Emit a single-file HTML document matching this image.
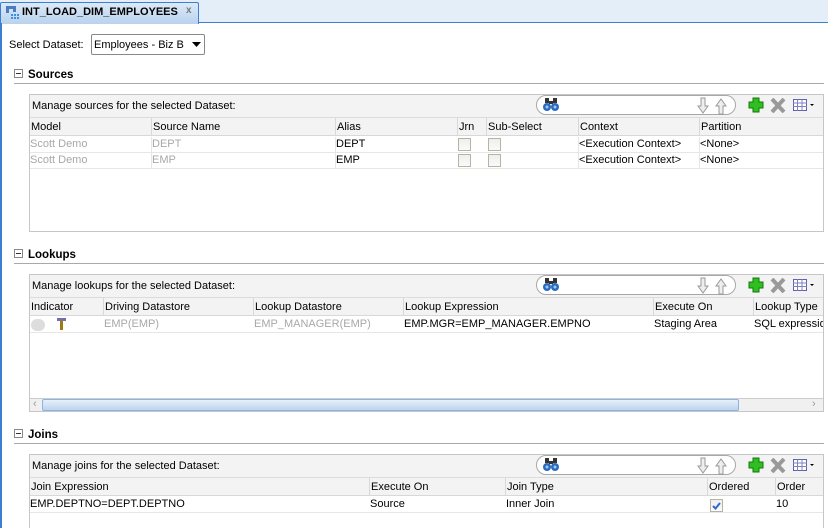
<!DOCTYPE html>
<html><head><meta charset="utf-8"><style>
*{margin:0;padding:0;box-sizing:border-box}
html,body{width:828px;height:528px;overflow:hidden}
body{background:#fff;font-family:"Liberation Sans",Arial,sans-serif;font-size:11px;color:#000;position:relative}
.a{position:absolute;white-space:nowrap}
.panel{position:absolute;left:29px;width:795px;border:1px solid #c6c6c6;background:#fff;overflow:hidden;white-space:nowrap}
.tb{position:absolute;left:0;top:0;right:0;height:23px;background:#f3f3f3;border-bottom:1px solid #dcdcdc}
.tb .t{position:absolute;left:2px;top:5px}
.search{position:absolute;top:1px;width:200px;height:20px;border:1px solid #a8a8a8;border-radius:10px;background:#fff}
.hdr{position:absolute;left:0;right:0;height:18px;background:#f3f3f3;border-bottom:1px solid #d8d8d8}
.hdr span{position:absolute;padding-left:1px;border-left:1px solid #d8d8d8;height:18px;top:0;line-height:18px;white-space:nowrap}
.row{position:absolute;left:0;right:0;height:16px;border-bottom:1px solid #e6e6e6;white-space:nowrap}
.row span{position:absolute;top:1px;padding-left:1px;white-space:nowrap}
.g{color:#a8a8a8}
.sec{position:absolute;left:14px;font-weight:bold;font-size:11.5px}
.sec i{display:inline-block;width:9px;height:9px;border:1px solid #888;margin-right:5px;position:relative;top:0px;font-style:normal;background:#fff}
.sec i:after{content:"";position:absolute;left:1px;top:3px;width:5px;height:1px;background:#333}
.line{position:absolute;left:14px;width:810px;height:1px;background:#a9a9a9}
.cb{position:absolute;width:13px;height:13px;border:1px solid #b4b4a0;background:linear-gradient(#eee,#fafafa)}
.ic{position:absolute}
</style></head><body>
<div class="a" style="left:0;top:0;width:828px;height:23px;background:#e4eef8"></div>
<div class="a" style="left:198px;top:22px;width:630px;height:1px;background:#3c7fd1"></div>
<div class="a" style="left:0;top:2px;width:199px;height:22px;background:linear-gradient(#dce9f7,#b9d2ee);border:1px solid #3c7fd1;border-bottom:none;border-radius:2px 2px 0 0"></div>
<svg class="a" style="left:5px;top:5px" width="16" height="16"><rect x="1" y="1" width="3" height="7" fill="#4a7cc0"/><rect x="1" y="1" width="9" height="3" fill="#4a7cc0"/><rect x="8" y="1" width="3" height="6" fill="#4a7cc0"/><g fill="#3a90e0"><rect x="6" y="9" width="2" height="2"/><rect x="9" y="9" width="2" height="2"/><rect x="12" y="9" width="2" height="2"/><rect x="6" y="12" width="2" height="2"/><rect x="9" y="12" width="2" height="2"/><rect x="12" y="12" width="2" height="2"/></g></svg>
<div class="a" style="left:22px;top:6px;font-weight:bold;font-size:11px">INT_LOAD_DIM_EMPLOYEES</div>
<div class="a" style="left:186px;top:5px;color:#777;font-size:10px;font-weight:bold">x</div>
<div class="a" style="left:0;top:23px;width:2px;height:505px;background:#3c7fd1"></div>

<div class="a" style="left:9px;top:39px">Select Dataset:</div>
<div class="a" style="left:91px;top:34px;width:114px;height:21px;border:1px solid #888;border-radius:2px;background:#fff"><span class="a" style="left:2px;top:4px">Employees - Biz B</span><svg class="a" style="left:100px;top:7px" width="9" height="5"><path d="M0 0H9L4.5 5Z" fill="#000"/></svg></div>

<div class="sec" style="top:69px"><i></i>Sources</div>
<div class="line" style="top:83px"></div>
<div class="panel" style="top:94px;height:138px">
 <div class="tb"><span class="t">Manage sources for the selected Dataset:</span></div>
 <div class="hdr" style="top:23px"><span style="left:0;border:none">Model</span><span style="left:121px">Source Name</span><span style="left:305px">Alias</span><span style="left:427px">Jrn</span><span style="left:456px">Sub-Select</span><span style="left:548px">Context</span><span style="left:669px">Partition</span></div>
 <div class="row" style="top:42px"><span class="g" style="left:-1px">Scott Demo</span><span class="g" style="left:121px">DEPT</span><span style="left:305px">DEPT</span><span style="left:548px">&lt;Execution Context&gt;</span><span style="left:669px">&lt;None&gt;</span></div>
 <div class="row" style="top:58px"><span class="g" style="left:-1px">Scott Demo</span><span class="g" style="left:121px">EMP</span><span style="left:305px">EMP</span><span style="left:548px">&lt;Execution Context&gt;</span><span style="left:669px">&lt;None&gt;</span></div>
 <div class="cb" style="left:428px;top:43px"></div><div class="cb" style="left:458px;top:43px"></div>
 <div class="cb" style="left:428px;top:59px"></div><div class="cb" style="left:458px;top:59px"></div>
 <div style="position:absolute;left:121px;top:42px;width:1px;height:32px;background:#e6e6e6"></div>
 <div style="position:absolute;left:305px;top:42px;width:1px;height:32px;background:#e6e6e6"></div>
 <div style="position:absolute;left:548px;top:42px;width:1px;height:32px;background:#e6e6e6"></div>
 <div style="position:absolute;left:669px;top:42px;width:1px;height:32px;background:#e6e6e6"></div>
</div>

<div class="sec" style="top:249px"><i></i>Lookups</div>
<div class="line" style="top:263px"></div>
<div class="panel" style="top:274px;height:138px">
 <div class="tb"><span class="t">Manage lookups for the selected Dataset:</span></div>
 <div class="hdr" style="top:23px"><span style="left:0;border:none">Indicator</span><span style="left:73px">Driving Datastore</span><span style="left:223px">Lookup Datastore</span><span style="left:373px">Lookup Expression</span><span style="left:623px">Execute On</span><span style="left:723px">Lookup Type</span></div>
 <div class="row" style="top:42px"><span class="g" style="left:73px">EMP(EMP)</span><span class="g" style="left:223px">EMP_MANAGER(EMP)</span><span style="left:373px">EMP.MGR=EMP_MANAGER.EMPNO</span><span style="left:623px">Staging Area</span><span style="left:723px">SQL expression</span></div>
 <div style="position:absolute;left:1px;top:44px;width:14px;height:12px;border-radius:6px;background:#ddd"></div>
 <svg style="position:absolute;left:27px;top:43px" width="9" height="12"><rect x="0" y="0" width="9" height="3" fill="#7070b0"/><rect x="3" y="3" width="3" height="9" fill="#a07810"/></svg>
 <div style="position:absolute;left:0;top:123px;width:795px;height:14px;background:#f0f0f0;border-top:1px solid #ccc"></div>
 <div style="position:absolute;left:12px;top:124px;width:697px;height:12px;background:linear-gradient(#e6f0fa,#bcd4ee);border:1px solid #8db2e3;border-radius:2px"></div>
 <div style="position:absolute;left:3px;top:123px;color:#999">&lsaquo;</div>
 <div style="position:absolute;left:782px;top:123px;color:#999">&rsaquo;</div>
</div>

<div class="sec" style="top:429px"><i></i>Joins</div>
<div class="line" style="top:443px"></div>
<div class="panel" style="top:454px;height:80px">
 <div class="tb"><span class="t">Manage joins for the selected Dataset:</span></div>
 <div class="hdr" style="top:23px"><span style="left:0;border:none">Join Expression</span><span style="left:339px">Execute On</span><span style="left:475px">Join Type</span><span style="left:677px">Ordered</span><span style="left:745px">Order</span></div>
 <div class="row" style="top:42px"><span style="left:-1px">EMP.DEPTNO=DEPT.DEPTNO</span><span style="left:339px">Source</span><span style="left:475px">Inner Join</span><span style="left:745px">10</span></div>
 <div class="cb" style="left:680px;top:44px"><svg width="11" height="11" style="position:absolute;left:0;top:0"><path d="M2 6L4.5 8.5L9 3" stroke="#3366cc" stroke-width="2" fill="none"/></svg></div>
</div>

<div class="ic" style="left:0;top:94px;width:828px;height:23px">
 <div class="search" style="left:536px"></div>
 <svg class="ic" style="left:543px;top:4px" width="16" height="14"><rect x="2" y="0" width="4" height="5" fill="#333"/><rect x="10" y="0" width="4" height="5" fill="#333"/><rect x="6" y="3" width="4" height="3" fill="#333"/><circle cx="4" cy="9" r="4" fill="#2a6bc0"/><circle cx="12" cy="9" r="4" fill="#2a6bc0"/><circle cx="4" cy="9" r="1.5" fill="#9cc8f0"/><circle cx="12" cy="9" r="1.5" fill="#9cc8f0"/></svg>
 <svg class="ic" style="left:697px;top:3px" width="34" height="18"><path d="M4 1h4v8h3l-5 7-5-7h3z" fill="#eee" stroke="#999"/><path d="M22 17h4v-8h3l-5-7-5 7h3z" fill="#eee" stroke="#999"/></svg>
 <svg class="ic" style="left:748px;top:3px" width="16" height="16"><path d="M5 1h6v4h4v6h-4v4H5v-4H1V5h4z" fill="#2fbf20" stroke="#137a0a"/></svg>
 <svg class="ic" style="left:770px;top:4px" width="16" height="15"><path d="M2 1L14 14M14 1L2 14" stroke="#999" stroke-width="4"/></svg>
 <svg class="ic" style="left:793px;top:5px" width="22" height="12"><rect x="0.5" y="0.5" width="13" height="11" fill="#fff" stroke="#6060b0"/><path d="M0 4h14M0 7.5h14M4.5 0v12M9 0v12" stroke="#8080c0"/><path d="M17 5h4l-2 2z" fill="#000"/></svg>
</div>
<div class="ic" style="left:0;top:274px;width:828px;height:23px">
 <div class="search" style="left:536px"></div>
 <svg class="ic" style="left:543px;top:4px" width="16" height="14"><rect x="2" y="0" width="4" height="5" fill="#333"/><rect x="10" y="0" width="4" height="5" fill="#333"/><rect x="6" y="3" width="4" height="3" fill="#333"/><circle cx="4" cy="9" r="4" fill="#2a6bc0"/><circle cx="12" cy="9" r="4" fill="#2a6bc0"/><circle cx="4" cy="9" r="1.5" fill="#9cc8f0"/><circle cx="12" cy="9" r="1.5" fill="#9cc8f0"/></svg>
 <svg class="ic" style="left:697px;top:3px" width="34" height="18"><path d="M4 1h4v8h3l-5 7-5-7h3z" fill="#eee" stroke="#999"/><path d="M22 17h4v-8h3l-5-7-5 7h3z" fill="#eee" stroke="#999"/></svg>
 <svg class="ic" style="left:748px;top:3px" width="16" height="16"><path d="M5 1h6v4h4v6h-4v4H5v-4H1V5h4z" fill="#2fbf20" stroke="#137a0a"/></svg>
 <svg class="ic" style="left:770px;top:4px" width="16" height="15"><path d="M2 1L14 14M14 1L2 14" stroke="#999" stroke-width="4"/></svg>
 <svg class="ic" style="left:793px;top:5px" width="22" height="12"><rect x="0.5" y="0.5" width="13" height="11" fill="#fff" stroke="#6060b0"/><path d="M0 4h14M0 7.5h14M4.5 0v12M9 0v12" stroke="#8080c0"/><path d="M17 5h4l-2 2z" fill="#000"/></svg>
</div>
<div class="ic" style="left:0;top:454px;width:828px;height:23px">
 <div class="search" style="left:536px"></div>
 <svg class="ic" style="left:543px;top:4px" width="16" height="14"><rect x="2" y="0" width="4" height="5" fill="#333"/><rect x="10" y="0" width="4" height="5" fill="#333"/><rect x="6" y="3" width="4" height="3" fill="#333"/><circle cx="4" cy="9" r="4" fill="#2a6bc0"/><circle cx="12" cy="9" r="4" fill="#2a6bc0"/><circle cx="4" cy="9" r="1.5" fill="#9cc8f0"/><circle cx="12" cy="9" r="1.5" fill="#9cc8f0"/></svg>
 <svg class="ic" style="left:697px;top:3px" width="34" height="18"><path d="M4 1h4v8h3l-5 7-5-7h3z" fill="#eee" stroke="#999"/><path d="M22 17h4v-8h3l-5-7-5 7h3z" fill="#eee" stroke="#999"/></svg>
 <svg class="ic" style="left:748px;top:3px" width="16" height="16"><path d="M5 1h6v4h4v6h-4v4H5v-4H1V5h4z" fill="#2fbf20" stroke="#137a0a"/></svg>
 <svg class="ic" style="left:770px;top:4px" width="16" height="15"><path d="M2 1L14 14M14 1L2 14" stroke="#999" stroke-width="4"/></svg>
 <svg class="ic" style="left:793px;top:5px" width="22" height="12"><rect x="0.5" y="0.5" width="13" height="11" fill="#fff" stroke="#6060b0"/><path d="M0 4h14M0 7.5h14M4.5 0v12M9 0v12" stroke="#8080c0"/><path d="M17 5h4l-2 2z" fill="#000"/></svg>
</div>
</body></html>
